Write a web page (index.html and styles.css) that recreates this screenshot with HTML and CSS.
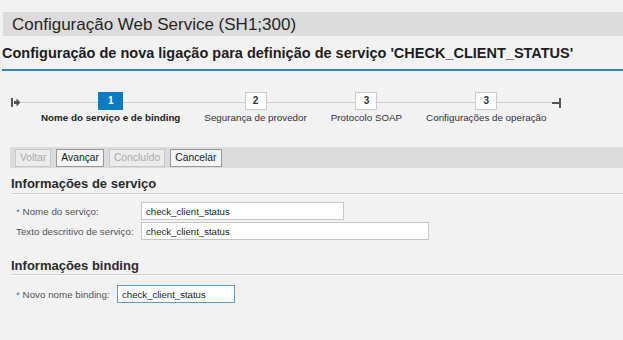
FILE: index.html
```html
<!DOCTYPE html>
<html lang="pt">
<head>
    <meta charset="UTF-8">
    <title>Configuração Web Service</title>
    <link rel="stylesheet" href="styles.css">
</head>
<body>
    <div class="page">
        <div class="title-bar">Configuração Web Service (SH1;300)</div>
        <h1 class="subtitle">Configuração de nova ligação para definição de serviço 'CHECK_CLIENT_STATUS'</h1>

        <div class="roadmap">
            <svg class="road-start" width="10" height="11" viewBox="0 0 10 11">
                <rect x="0" y="1" width="2" height="9" fill="#555"/>
                <path d="M3 4 H5.5 V1.5 L9.5 5.5 L5.5 9.5 V7 H3 Z" fill="#555"/>
            </svg>
            <svg class="road-end" width="10" height="10" viewBox="0 0 10 10">
                <rect x="0" y="4" width="7" height="2" fill="#555"/>
                <rect x="7" y="0" width="2" height="10" fill="#555"/>
            </svg>
            <div class="step active">
                <div class="step-box">1</div>
                <div class="step-label">Nome do serviço e de binding</div>
            </div>
            <div class="step">
                <div class="step-box">2</div>
                <div class="step-label">Segurança de provedor</div>
            </div>
            <div class="step">
                <div class="step-box">3</div>
                <div class="step-label">Protocolo SOAP</div>
            </div>
            <div class="step">
                <div class="step-box">3</div>
                <div class="step-label">Configurações de operação</div>
            </div>
        </div>

        <div class="toolbar">
            <button class="btn" disabled>Voltar</button>
            <button class="btn">Avançar</button>
            <button class="btn" disabled>Concluído</button>
            <button class="btn">Cancelar</button>
        </div>

        <div class="section">
            <h2 class="section-title">Informações de serviço</h2>
            <div class="form-row">
                <label class="field-label"><span class="req">*</span> Nome do serviço:</label>
                <input class="field short" type="text" value="check_client_status">
            </div>
            <div class="form-row">
                <label class="field-label">Texto descritivo de serviço:</label>
                <input class="field long" type="text" value="check_client_status">
            </div>
        </div>

        <div class="section">
            <h2 class="section-title">Informações binding</h2>
            <div class="form-row">
                <label class="field-label narrow"><span class="req">*</span> Novo nome binding:</label>
                <input class="field binding" type="text" value="check_client_status">
            </div>
        </div>
    </div>
</body>
</html>
```

FILE: styles.css
```css
body {
    margin: 0;
    background-color: #f2f2f2;
    font-family: "Liberation Sans", Arial, sans-serif;
    color: #333;
}

.page {
    padding-top: 12px;
}

.title-bar {
    margin-left: 3px;
    height: 24px;
    line-height: 25px;
    padding-left: 9px;
    background-color: #dcdcdc;
    font-size: 17px;
    color: #262626;
}

.subtitle {
    margin: 9px 0 0 2px;
    padding-bottom: 7px;
    font-size: 14.5px;
    line-height: 17px;
    font-weight: bold;
    color: #1e1e1e;
    border-bottom: 2px solid #2e87c1;
}

.roadmap {
    position: relative;
    display: flex;
    gap: 24px;
    padding: 21px 0 0 41px;
    height: 76px;
    box-sizing: border-box;
}

.roadmap::before {
    content: "";
    position: absolute;
    left: 21px;
    width: 534px;
    top: 31px;
    border-top: 1px solid #cfcfcf;
}

.road-start, .road-end {
    position: absolute;
    top: 26px;
}

.road-start {
    left: 11px;
}

.road-end {
    left: 552px;
    top: 27px;
}

.step {
    position: relative;
    display: flex;
    flex-direction: column;
    align-items: center;
}

.step-box {
    width: 20px;
    height: 16px;
    line-height: 16px;
    text-align: center;
    background-color: #fff;
    border: 1px solid #ccc;
    font-size: 10px;
    font-weight: bold;
    color: #333;
}

.step.active .step-box {
    width: 25px;
    height: 18px;
    line-height: 18px;
    border: none;
    background-color: #0a7cc1;
    color: #fff;
}

.step-label {
    margin-top: 2px;
    font-size: 9.8px;
    line-height: 12px;
    color: #333;
    white-space: nowrap;
}

.step.active .step-label {
    font-weight: bold;
    color: #222;
}

.toolbar {
    display: flex;
    gap: 5px;
    margin-left: 10px;
    padding: 0 5px;
    height: 21px;
    align-items: center;
    background-color: #dcdcdc;
}

.btn {
    height: 18px;
    padding: 0 4px;
    font-family: "Liberation Sans", Arial, sans-serif;
    font-size: 10.3px;
    color: #222;
    background-color: #f4f4f4;
    border: 1px solid #999;
    border-radius: 0;
}

.btn:disabled {
    color: #aaa;
    border-color: #c8c8c8;
    background-color: #ececec;
}

.section {
    margin-left: 10px;
}

.section-title {
    margin: 8px 0 0 1px;
    padding-bottom: 2px;
    font-size: 13px;
    line-height: 15px;
    font-weight: bold;
    color: #2b2b2b;
    border-bottom: 1px solid #cfcfcf;
    box-shadow: 0 1px 0 #fafafa;
}

.section + .section .section-title {
    margin-top: 18px;
    padding-bottom: 1px;
}

.form-row {
    display: flex;
    align-items: center;
    margin-top: 2px;
    padding-left: 6px;
}

.section-title + .form-row {
    margin-top: 8px;
}

.section + .section .section-title + .form-row {
    margin-top: 10px;
}

.field-label {
    width: 125px;
    font-size: 9.8px;
    color: #555;
    white-space: nowrap;
}

.field-label.narrow {
    width: 101px;
}

.req {
    color: #2e87c1;
}

.field {
    height: 18px;
    box-sizing: border-box;
    padding: 0 4px;
    font-family: "Liberation Sans", Arial, sans-serif;
    font-size: 9.6px;
    color: #222;
    background-color: #fff;
    border: 1px solid #c6c6c6;
}

.field.short {
    width: 203px;
}

.field.long {
    width: 288px;
}

.field.binding {
    width: 118px;
    border-color: #5a9ed0;
}
```
